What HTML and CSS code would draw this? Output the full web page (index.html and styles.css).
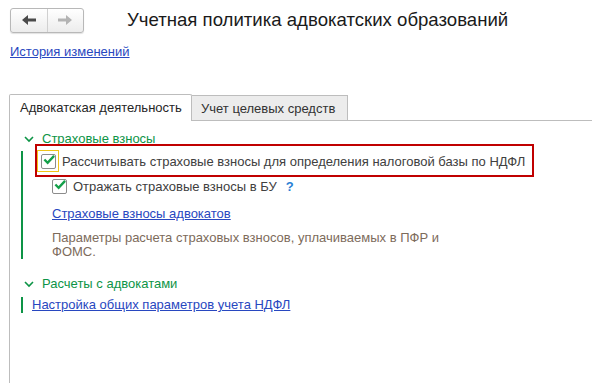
FILE: index.html
```html
<!DOCTYPE html>
<html lang="ru">
<head>
    <meta charset="UTF-8">
    <title>Учетная политика адвокатских образований</title>
    <link rel="stylesheet" href="styles.css">
</head>
<body>
    <div class="header">
        <div class="nav">
            <span class="nav-btn">
                <svg width="14" height="10" viewBox="0 0 14 10"><path d="M0 5 L6 0 L6 3.5 L14 3.5 L14 6.5 L6 6.5 L6 10 Z" fill="#4a4a4a"/></svg>
            </span>
            <span class="nav-btn">
                <svg width="14" height="10" viewBox="0 0 14 10"><path d="M14 5 L8 0 L8 3.5 L0 3.5 L0 6.5 L8 6.5 L8 10 Z" fill="#b3b3b3"/></svg>
            </span>
        </div>
        <h1>Учетная политика адвокатских образований</h1>
    </div>

    <a href="#" class="history">История изменений</a>

    <div class="tabs">
        <div class="tab active">Адвокатская деятельность</div>
        <div class="tab">Учет целевых средств</div>
        <div class="tab-fill"></div>
    </div>

    <div class="panel">
        <div class="group-title">
            <svg width="10" height="7" viewBox="0 0 10 7"><path d="M1 1 L5 5 L9 1" fill="none" stroke="#0d9446" stroke-width="1.6"/></svg>
            Страховые взносы
        </div>
        <div class="group-body">
            <div class="row first highlight">
                <span class="focus"><span class="check"><svg width="13" height="11" viewBox="0 0 13 11"><path d="M1.5 5.5 L5 9 L12 1.5" fill="none" stroke="#14a04a" stroke-width="2.6"/></svg></span></span>
                Рассчитывать страховые взносы для определения налоговой базы по НДФЛ
            </div>
            <div class="row second">
                <span class="check"><svg width="13" height="11" viewBox="0 0 13 11"><path d="M1.5 5.5 L5 9 L12 1.5" fill="none" stroke="#14a04a" stroke-width="2.6"/></svg></span>
                Отражать страховые взносы в БУ <span class="help">?</span>
            </div>
            <a href="#" class="link indent">Страховые взносы адвокатов</a>
            <p class="note">Параметры расчета страховых взносов, уплачиваемых в ПФР и<br>ФОМС.</p>
        </div>

        <div class="group-title second-group">
            <svg width="10" height="7" viewBox="0 0 10 7"><path d="M1 1 L5 5 L9 1" fill="none" stroke="#0d9446" stroke-width="1.6"/></svg>
            Расчеты с адвокатами
        </div>
        <div class="group-body short">
            <a href="#" class="link">Настройка общих параметров учета НДФЛ</a>
        </div>
    </div>
</body>
</html>
```

FILE: styles.css
```css
body {
    margin: 0;
    padding: 8px 0 0 9px;
    font-family: 'Liberation Sans', Arial, sans-serif;
    font-size: 13px;
    color: #404040;
    background: #fff;
    height: 375px;
    overflow: hidden;
}
.header {
    display: flex;
    align-items: center;
    height: 24px;
}
.nav {
    display: flex;
    width: 72px;
    height: 23px;
    margin-left: 1px;
    border: 1px solid #b8b8b8;
    border-radius: 3px;
    background: linear-gradient(#ffffff, #ececec);
    box-shadow: 0 1px 1px rgba(0, 0, 0, 0.12);
}
.nav-btn {
    flex: 1;
    display: flex;
    align-items: center;
    justify-content: center;
}
.nav-btn + .nav-btn {
    border-left: 1px solid #d0d0d0;
}
h1 {
    margin: 0 0 0 43px;
    font-size: 18.6px;
    font-weight: normal;
    color: #1a1a1a;
}
.history {
    display: inline-block;
    margin: 12px 0 0 1px;
    line-height: 15px;
    color: #2847c0;
}
.tabs {
    display: flex;
    align-items: flex-end;
    margin-top: 35px;
    height: 27px;
}
.tab {
    line-height: 25px;
    padding: 0 9px;
    background: #ececec;
    border: 1px solid #bdbdbd;
    border-left: none;
    color: #333;
    box-sizing: border-box;
    height: 26px;
    width: 156px;
    white-space: nowrap;
}
.tab.active {
    width: 183px;
    height: 27px;
    padding: 0 10px;
    background: #fff;
    border-left: 1px solid #bdbdbd;
    border-bottom: none;
    border-radius: 2px 2px 0 0;
    color: #262626;
}
.tab-fill {
    flex: 1;
    border-bottom: 1px solid #bdbdbd;
}
.panel {
    border-left: 1px solid #bdbdbd;
    height: 262px;
    padding: 10px 0 0 14px;
}
.group-title {
    display: flex;
    align-items: center;
    gap: 8px;
    line-height: 16px;
    color: #0d9446;
}
.group-title.second-group {
    margin-top: 17px;
}
.group-body {
    margin: 4px 0 0 -3px;
    border-left: 2px solid #0d9446;
    padding-left: 12px;
    height: 108px;
}
.group-body.short {
    margin-top: 5px;
    height: 16px;
    padding-left: 9px;
}
.row {
    display: flex;
    align-items: center;
    gap: 3px;
}
.row.first {
    height: 20px;
    padding-left: 2px;
}
.highlight {
    position: relative;
}
.highlight::after {
    content: "";
    position: absolute;
    top: -7px;
    left: 0;
    width: 495px;
    height: 29px;
    border: 2px solid #c00000;
}
.focus {
    display: flex;
    align-items: center;
    justify-content: center;
    width: 22px;
    height: 22px;
    border: 1px solid #f0c419;
    box-sizing: border-box;
}
.check {
    display: flex;
    align-items: center;
    justify-content: center;
    width: 15px;
    height: 15px;
    border: 1px solid #8c8c8c;
    border-radius: 2px;
    box-sizing: border-box;
    background: #fff;
}
.check svg {
    margin-top: -3px;
    margin-left: 1px;
}
.row.second {
    margin-top: 7px;
    height: 16px;
    padding-left: 17px;
    gap: 6px;
}
.help {
    color: #2a7fd4;
    font-weight: bold;
    margin-left: 3px;
}
.link {
    display: inline-block;
    line-height: 16px;
    color: #2847c0;
}
.indent {
    margin: 12px 0 0 17px;
}
.note {
    margin: 9px 0 0 17px;
    line-height: 14px;
    color: #7d6b5b;
}
```
